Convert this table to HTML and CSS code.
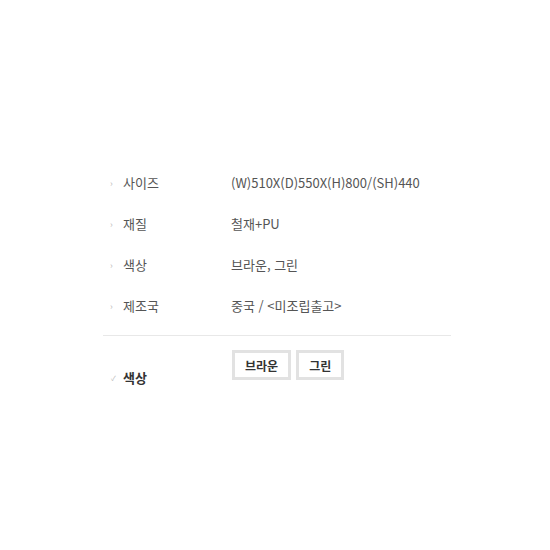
FILE: index.html
```html
<!DOCTYPE html>
<html lang="ko">
<head>
  <meta charset="UTF-8" />
  <title>상품 정보</title>
  <link rel="stylesheet" href="styles.css">
</head>
<body>
  <div class="detail">
    <ul class="info">
      <li class="row"><span class="label">사이즈</span><span class="value">(W)510X(D)550X(H)800/(SH)440</span></li>
      <li class="row"><span class="label">재질</span><span class="value">철재+PU</span></li>
      <li class="row"><span class="label">색상</span><span class="value">브라운, 그린</span></li>
      <li class="row"><span class="label">제조국</span><span class="value">중국 / &lt;미조립출고&gt;</span></li>
    </ul>

    <div class="option">
      <div class="option-label"><span class="check">&#10003;</span>색상</div>
      <div class="option-values">
        <button class="opt">브라운</button>
        <button class="opt">그린</button>
      </div>
    </div>
  </div>
</body>
</html>
```

FILE: styles.css
```css
* {
  margin: 0;
  padding: 0;
  box-sizing: border-box;
}

body {
  font-family: "Malgun Gothic", "Noto Sans CJK KR", "Noto Sans", sans-serif;
  font-size: 13px;
  color: #555;
  background: #fff;
}

.detail {
  width: 348px;
  margin: 162px 0 0 103px;
}

.info {
  list-style: none;
  padding-bottom: 9px;
  border-bottom: 1px solid #e8e8e8;
}

.row {
  display: flex;
  height: 41px;
  align-items: center;
}

.label {
  width: 128px;
  padding-left: 20px;
  position: relative;
}

.label::before {
  content: "›";
  position: absolute;
  left: 7px;
  top: 4px;
  font-size: 9px;
  color: #bbb;
}

.value {
  flex: 1;
}

.option {
  display: flex;
  padding-top: 14px;
}

.option-label {
  width: 128px;
  padding-left: 20px;
  padding-top: 18px;
  font-weight: bold;
  color: #333;
  position: relative;
}

.check {
  position: absolute;
  left: 8px;
  top: 23px;
  font-size: 7px;
  color: #bbb;
  font-weight: normal;
}

.option-values {
  display: flex;
  gap: 5px;
  padding-left: 1px;
}

.opt {
  font-family: inherit;
  font-size: 12px;
  font-weight: bold;
  color: #333;
  background: #fff;
  border: 3px solid #e2e2e2;
  height: 30px;
  padding: 0 10px;
  cursor: pointer;
}
```
